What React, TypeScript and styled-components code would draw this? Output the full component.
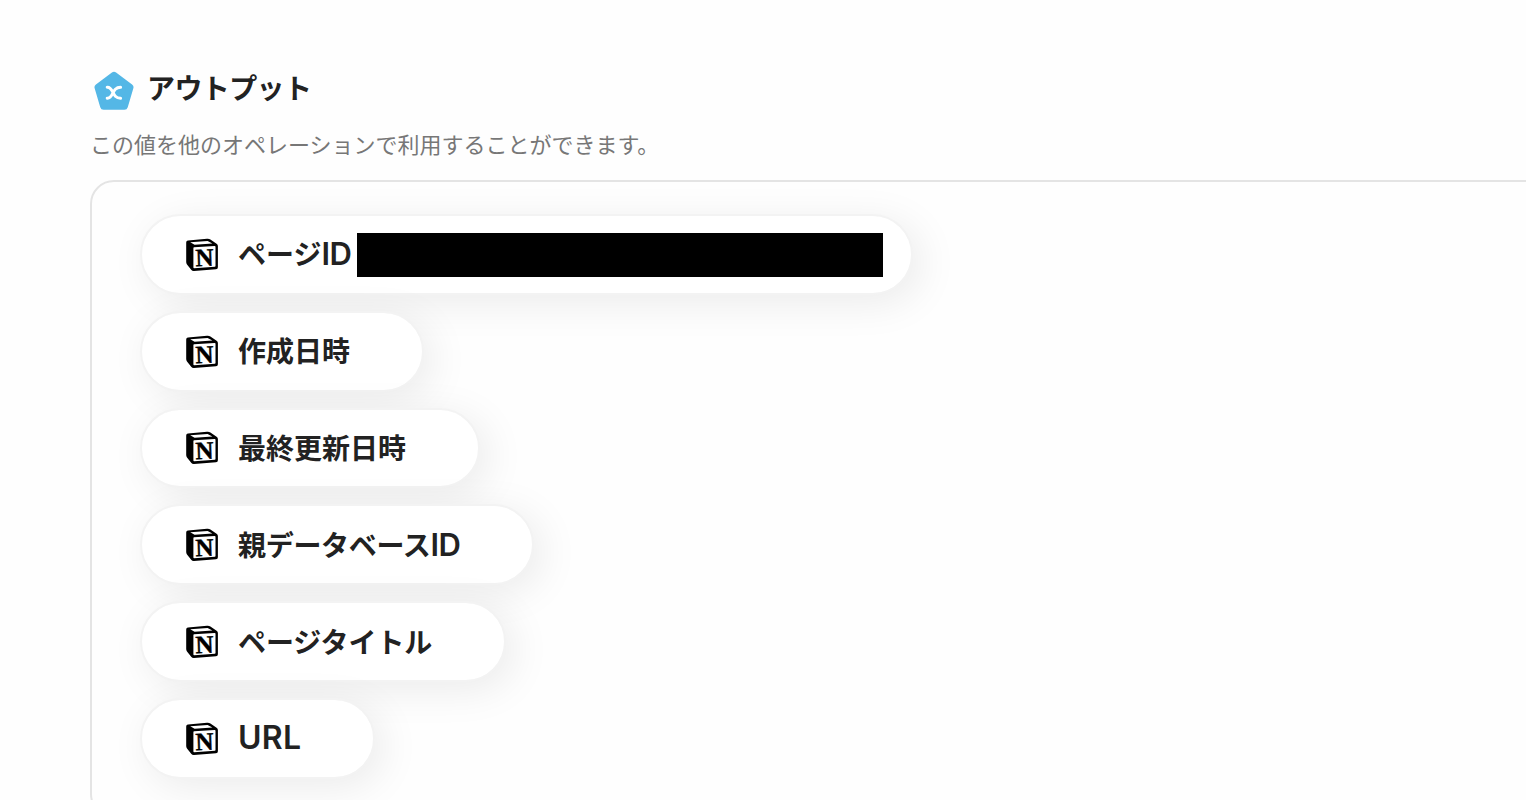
import React from "react";
import styled, { createGlobalStyle } from "styled-components";

interface OutputItem {
	id: string;
	label: string;
	latin?: string;
	masked?: boolean;
	spacing?: number;
}

const outputs: OutputItem[] = [
	{ id: "page-id", label: "ページ", latin: "ID", masked: true },
	{ id: "created", label: "作成日時" },
	{ id: "updated", label: "最終更新日時" },
	{ id: "database-id", label: "親データベース", latin: "ID", spacing: -0.3 },
	{ id: "title", label: "ページタイトル", spacing: -0.1 },
	{ id: "url", label: "", latin: "URL" }
];

const GlobalStyle = createGlobalStyle`
	* {
		box-sizing: border-box;
	}
	body {
		margin: 0;
		height: 800px;
		overflow: hidden;
		background: #fefefe;
		color: #222;
		font-family: "Noto Sans CJK JP", sans-serif;
	}
`;

const Page = styled.main`
	width: 1600px;
	padding: 66px 0 0 90px;
`;

const Header = styled.header`
	display: flex;
	align-items: center;
	height: 48px;
	padding-left: 4px;
`;

const Badge = styled.svg`
	display: block;
	width: 40px;
	height: 40px;
	margin-top: 2px;
`;

const Heading = styled.h1`
	margin: 0 0 6px 13px;
	font-size: 28px;
	line-height: 40px;
	font-weight: 700;
	letter-spacing: -0.6px;
`;

const Description = styled.p`
	margin: 12px 0 0;
	font-size: 22px;
	line-height: 34px;
	color: #777;
`;

const Panel = styled.section`
	display: flex;
	flex-direction: column;
	align-items: flex-start;
	gap: 16px;
	height: 638px;
	margin-top: 20px;
	padding: 32px 48px;
	border: 2px solid #e4e4e4;
	border-radius: 24px;
`;

interface PillProps {
	$masked?: boolean;
}
const Pill = styled.div<PillProps>`
	display: flex;
	align-items: center;
	flex-shrink: 0;
	height: 80.8px;
	padding: 0 ${props => (props.$masked ? 28 : 72)}px 0 44px;
	border: 2px solid #f3f3f3;
	border-radius: 41px;
	background: #fff;
	background-clip: padding-box;
	box-shadow: 8px 8px 40px rgba(0, 0, 0, 0.08);
`;

const Cube = styled.svg`
	width: 32px;
	height: 34px;
	margin: 1px 20px 0 0;
	overflow: visible;
`;

const CubeLetter = styled.text`
	font-family: "Liberation Serif", serif;
	font-size: 25px;
	font-weight: 700;
	stroke: #000;
	stroke-width: 0.5px;
`;

interface LabelProps {
	$spacing?: number;
}
const Label = styled.span<LabelProps>`
	margin-bottom: 2px;
	font-size: 28px;
	line-height: 44px;
	font-weight: 700;
	letter-spacing: ${props => props.$spacing || 0}px;
	white-space: nowrap;
`;

interface LatinProps {
	$wide: boolean;
}
const Latin = styled.span<LatinProps>`
	font-family: Inter, sans-serif;
	font-size: ${props => (props.$wide ? 32 : 31)}px;
	line-height: 1;
	font-weight: 600;
	letter-spacing: ${props => (props.$wide ? 0.3 : -0.6)}px;
`;

const Mask = styled.div`
	width: 526px;
	height: 44px;
	margin: 1px 0 0 6px;
	background: #000;
`;

const NotionIcon: React.FC = () => (
	<Cube viewBox="0 0 32 34">
		<path d="M2 2.4L21 .8Q23 .6 24.4 1.6L30.6 5.8Q31.9 6.7 31.9 8V29.2Q31.9 31.1 30 31.3L8 33Q6.2 33.1 5.2 31.8L1 26.4Q.2 25.3.2 24V4.4Q.2 2.5 2 2.4Z" />
		<path
			d="M4.2 4.2L21.6 2.9L26.4 5.6L8.6 6.8ZM7.4 10Q7.4 9.3 8.1 9.2L28.7 8Q29.5 8 29.5 8.7V28Q29.5 28.7 28.8 28.8L8.2 30.2Q7.4 30.2 7.4 29.5Z"
			fill="#fff"
		/>
		<CubeLetter x="9.4" y="28" transform="rotate(-2 18 20)">
			N
		</CubeLetter>
	</Cube>
);

const App: React.FC = () => {
	return (
		<Page>
			<GlobalStyle />
			<Header>
				<Badge viewBox="0 0 40 40">
					<path
						d="M20 4.4L36 16.2L30.4 35.2H9.6L4 16.2Z"
						fill="#54b7e6"
						stroke="#54b7e6"
						strokeWidth="7"
						strokeLinejoin="round"
					/>
					<path
						d="M13.2 16.2C20 15.8 17.4 27.2 26.6 27.2M26.6 16.2C17.4 16.2 20 27.6 13.2 27.2"
						fill="none"
						stroke="#fff"
						strokeWidth="3"
						strokeLinecap="round"
					/>
				</Badge>
				<Heading>アウトプット</Heading>
			</Header>
			<Description>この値を他のオペレーションで利用することができます。</Description>
			<Panel>
				{outputs.map((item: OutputItem) => (
					<Pill key={item.id} $masked={item.masked}>
						<NotionIcon />
						<Label $spacing={item.spacing}>
							{item.label}
							{item.latin && <Latin $wide={!item.label}>{item.latin}</Latin>}
						</Label>
						{item.masked && <Mask />}
					</Pill>
				))}
			</Panel>
		</Page>
	);
};

export default App;
